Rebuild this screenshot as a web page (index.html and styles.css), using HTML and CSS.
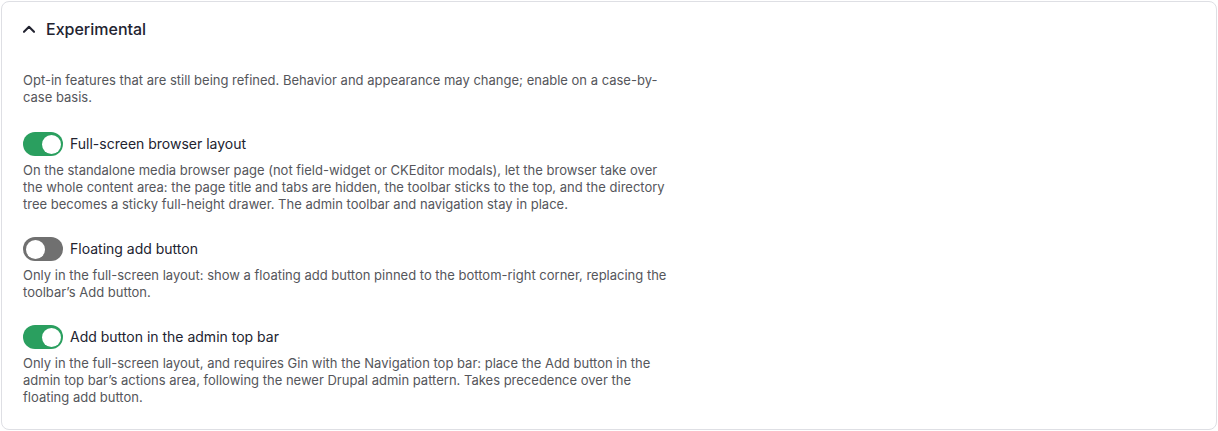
FILE: index.html
```html
<!DOCTYPE html>
<html>
<head>
  <link rel="stylesheet" href="styles.css">
</head>
<body>
  <details class="panel" open>
    <summary class="panel-summary">
      <svg class="chevron" width="12" height="8" viewBox="0 0 12 8" aria-hidden="true">
        <path d="M1 6.8 6 1.8l5 5" fill="none" stroke="currentColor" stroke-width="2.1" stroke-linecap="round" stroke-linejoin="round"/>
      </svg>
      <span class="panel-title">Experimental</span>
    </summary>
    <div class="panel-body">
      <p class="intro">Opt-in features that are still being refined. Behavior and appearance may change; enable on a case-by-case basis.</p>

      <div class="option">
        <label class="option-row">
          <span class="switch">
            <input type="checkbox" checked>
            <span class="slider"></span>
          </span>
          <span class="option-label">Full-screen browser layout</span>
        </label>
        <p class="option-desc">On the standalone media browser page (not field-widget or CKEditor modals), let the browser take over the whole content area: the page title and tabs are hidden, the toolbar sticks to the top, and the directory tree becomes a sticky full-height drawer. The admin toolbar and navigation stay in place.</p>
      </div>

      <div class="option">
        <label class="option-row">
          <span class="switch">
            <input type="checkbox">
            <span class="slider"></span>
          </span>
          <span class="option-label">Floating add button</span>
        </label>
        <p class="option-desc">Only in the full-screen layout: show a floating add button pinned to the bottom-right corner, replacing the toolbar’s Add button.</p>
      </div>

      <div class="option">
        <label class="option-row">
          <span class="switch">
            <input type="checkbox" checked>
            <span class="slider"></span>
          </span>
          <span class="option-label">Add button in the admin top bar</span>
        </label>
        <p class="option-desc">Only in the full-screen layout, and requires Gin with the Navigation top bar: place the Add button in the admin top bar’s actions area, following the newer Drupal admin pattern. Takes precedence over the floating add button.</p>
      </div>
    </div>
  </details>
</body>
</html>
```

FILE: styles.css
```css
:root {
  --background: #ffffff;
  --foreground: #222330;
  --muted-foreground: #55565b;
  --border: #dedfe4;
  --primary: #2a9f5f;
  --switch-off: #707070;
  --radius: 8px;
}

body {
  margin: 0;
  padding: 1px;
  font-family: Inter, "Liberation Sans", sans-serif;
  background: var(--background);
  color: var(--foreground);
}

.panel {
  border: 1px solid var(--border);
  border-radius: var(--radius);
  background: var(--background);
  height: 427px;
}

.panel-summary {
  list-style: none;
  display: flex;
  align-items: center;
  gap: 11px;
  padding: 17px 21px 18px;
  cursor: pointer;
}

.panel-summary::-webkit-details-marker {
  display: none;
}

.chevron {
  color: var(--foreground);
}

.panel-title {
  font-size: 16px;
  line-height: 20px;
  font-weight: 500;
}

.panel-body {
  padding: 15px 21px 0;
  width: 650px;
}

.intro,
.option-desc {
  margin: 0;
  font-size: 13px;
  line-height: 17px;
  color: var(--muted-foreground);
}

.intro {
  margin-bottom: 26px;
}

.option + .option {
  margin-top: 24px;
}

.option-row {
  display: flex;
  align-items: center;
  gap: 7px;
  cursor: pointer;
}

.option-label {
  font-size: 14px;
  line-height: 20px;
  color: var(--foreground);
}

.option-desc {
  margin-top: 6px;
}

.switch {
  position: relative;
  width: 40px;
  height: 24px;
  flex: none;
}

.switch input {
  opacity: 0;
  width: 0;
  height: 0;
  margin: 0;
}

.slider {
  position: absolute;
  inset: 0;
  background-color: var(--switch-off);
  border-radius: 12px;
  transition: .2s;
}

.slider:before {
  position: absolute;
  content: "";
  width: 19px;
  height: 19px;
  left: 2.5px;
  top: 2.5px;
  background-color: #fff;
  border-radius: 50%;
  transition: .2s;
}

input:checked + .slider {
  background-color: var(--primary);
}

input:checked + .slider:before {
  transform: translateX(16px);
}
```
